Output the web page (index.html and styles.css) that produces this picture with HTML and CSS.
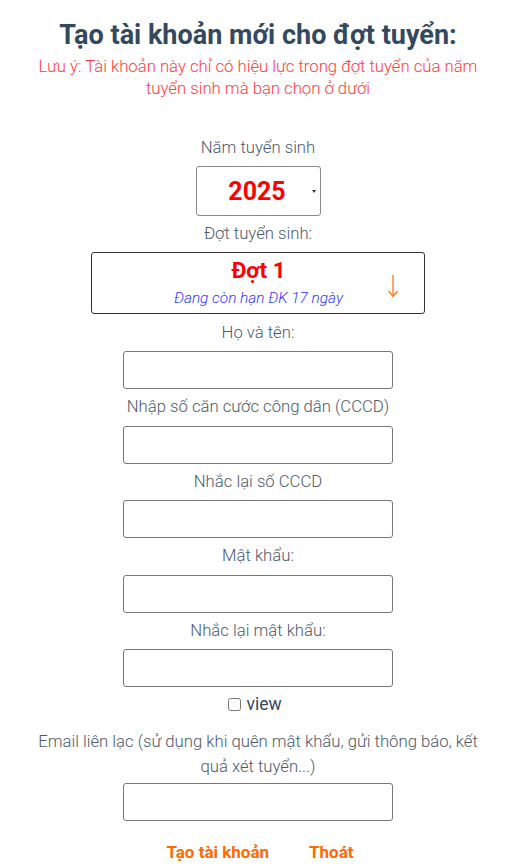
FILE: index.html
```html
<!DOCTYPE html>
<html lang="vi">
<head>
    <meta charset="UTF-8">
    <meta name="viewport" content="width=device-width, initial-scale=1.0">
    <title>Tạo tài khoản</title>
    <link rel="stylesheet" href="styles.css">
</head>
<body>
    <div class="container">
        <h1>Tạo tài khoản mới cho đợt tuyển:</h1>
        <p class="note">Lưu ý: Tài khoản này chỉ có hiệu lực trong đợt tuyển của năm tuyển sinh mà bạn chọn ở dưới</p>

        <form class="signup">
            <label class="lbl">Năm tuyển sinh</label>
            <div class="year-select">
                <span class="year">2025</span>
                <span class="caret"></span>
            </div>

            <label class="lbl lbl-round">Đợt tuyển sinh:</label>
            <div class="round-box">
                <div class="round-info">
                    <span class="round-name">Đợt 1</span>
                    <span class="round-days">Đang còn hạn ĐK 17 ngày</span>
                </div>
                <svg class="round-arrow" width="12" height="24" viewBox="0 0 12 24">
                    <path d="M6 1 V22 M1.5 17 L6 22.5 L10.5 17" fill="none" stroke="#ff7f27" stroke-width="1.4"/>
                </svg>
            </div>

            <label class="lbl">Họ và tên:</label>
            <input type="text" class="field">

            <label class="lbl">Nhập số căn cước công dân (CCCD)</label>
            <input type="text" class="field">

            <label class="lbl">Nhắc lại số CCCD</label>
            <input type="text" class="field">

            <label class="lbl">Mật khẩu:</label>
            <input type="password" class="field">

            <label class="lbl">Nhắc lại mật khẩu:</label>
            <input type="password" class="field">

            <label class="view"><input type="checkbox"> view</label>

            <label class="lbl lbl-wide">Email liên lạc (sử dụng khi quên mật khẩu, gửi thông báo, kết quả xét tuyển...)</label>
            <input type="email" class="field">

            <div class="actions">
                <a class="action">Tạo tài khoản</a>
                <a class="action">Thoát</a>
            </div>
        </form>
    </div>
</body>
</html>
```
FILE: styles.css
```css
/* General styling */
body {
    font-family: Roboto, "Noto Sans", sans-serif;
    background-color: #ffffff;
    color: #4b5a6b;
    margin: 0;
}

.container {
    text-align: center;
    padding-top: 18px;
}

h1 {
    font-size: 27px;
    font-weight: 700;
    color: #34495e;
    margin: 0;
    line-height: 34px;
}

.note {
    color: #ff3b3b;
    font-size: 16.7px;
    font-weight: 300;
    line-height: 22px;
    margin: 4px auto 0;
    width: 460px;
}

/* Form */
.signup {
    display: flex;
    flex-direction: column;
    align-items: center;
    padding-top: 34.5px;
}

.lbl {
    font-size: 16.7px;
    font-weight: 300;
    line-height: 25px;
    color: #4b5a6b;
    margin-bottom: 6.5px;
}

.lbl-wide {
    width: 460px;
    margin-bottom: 4.5px;
}

.field {
    box-sizing: border-box;
    width: 270px;
    height: 38px;
    border: 1px solid #777;
    border-radius: 3px;
    margin: 0 0 5px;
    font-size: 16px;
}

/* Year select */
.year-select {
    box-sizing: border-box;
    width: 125px;
    height: 50px;
    border: 1px solid #888;
    border-radius: 3px;
    display: flex;
    align-items: center;
    justify-content: center;
    position: relative;
    margin-bottom: 4.5px;
}

.year {
    color: #ff0000;
    font-size: 25px;
    font-weight: 700;
    margin-left: -2px;
}

.caret {
    position: absolute;
    right: 4px;
    top: 23px;
    border-left: 2.5px solid transparent;
    border-right: 2.5px solid transparent;
    border-top: 3px solid #333;
}

/* Round box */
.round-box {
    box-sizing: border-box;
    width: 334px;
    height: 62px;
    border: 1px solid #333;
    border-radius: 3px;
    display: flex;
    align-items: center;
    margin-bottom: 5.5px;
}

.round-info {
    flex: 1;
    display: flex;
    flex-direction: column;
    align-items: center;
    padding: 2px 0 0 38px;
}

.round-name {
    color: #ff0000;
    font-size: 22.5px;
    font-weight: 700;
    line-height: 28px;
}

.round-days {
    color: #3333ff;
    font-size: 15.4px;
    font-style: italic;
    font-weight: 300;
    line-height: 28px;
}

.round-arrow {
    margin: 6px 25px 0 0;
}

/* View checkbox */
.view {
    font-size: 17.5px;
    color: #34495e;
    line-height: 24px;
    margin: 0 0 12.5px;
    padding-right: 6px;
    display: flex;
    align-items: center;
    gap: 5px;
}

.view input {
    margin: 0;
    width: 13px;
    height: 13px;
}

/* Actions */
.actions {
    display: flex;
    gap: 40px;
    margin: 14px 0 0 4px;
}

.action {
    color: #ff6a00;
    font-weight: 700;
    font-size: 17px;
    line-height: 24px;
    cursor: pointer;
}
```
